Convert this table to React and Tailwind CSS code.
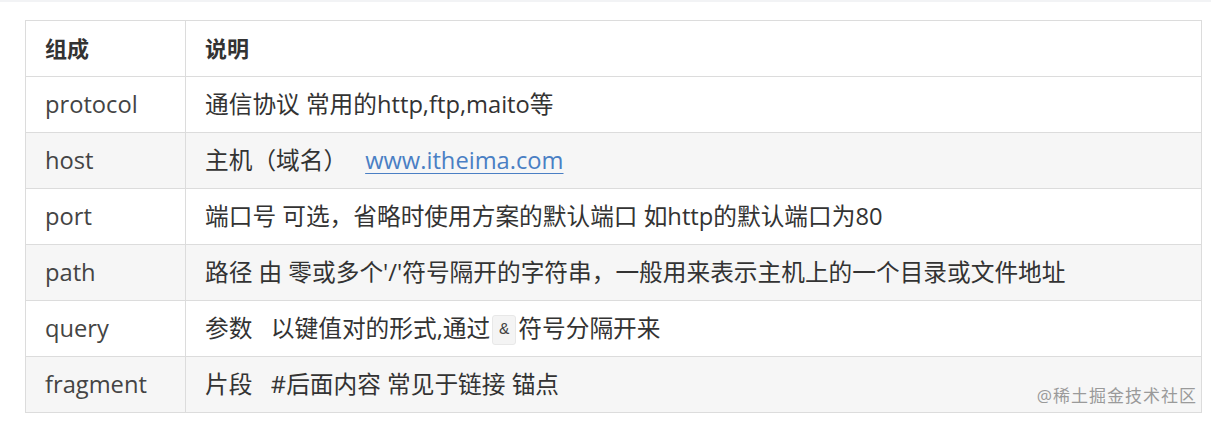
const rows = [
  { k: 'protocol', v: <>通信协议 常用的http,ftp,maito等</> },
  {
    k: 'host',
    v: (
      <>
        主机（域名）
        <a href="#" className="ml-[18px] text-[#4a7fc4] underline underline-offset-[4px] decoration-1">
          www.itheima.com
        </a>
      </>
    ),
  },
  { k: 'port', v: <>端口号 可选，省略时使用方案的默认端口 如http的默认端口为80</> },
  { k: 'path', v: <>路径 由 零或多个'/'符号隔开的字符串，一般用来表示主机上的一个目录或文件地址</> },
  {
    k: 'query',
    v: (
      <>
        参数&nbsp;&nbsp;&nbsp;以键值对的形式,通过
        <code className="mx-[2px] inline-block h-[30px] rounded-[3px] border border-[#e8e8e8] bg-[#f4f4f4] px-[6px] align-middle text-[17px] leading-[28px] text-[#444]">
          &amp;
        </code>
        符号分隔开来
      </>
    ),
  },
  { k: 'fragment', v: <>片段&nbsp;&nbsp;&nbsp;#后面内容 常见于链接 锚点</> },
];

export default function App() {
  return (
    <div
      className="relative h-[424px] w-[1211px] overflow-hidden bg-white text-[#333]"
      style={{ fontFamily: '"Open Sans", "Noto Sans CJK SC", sans-serif' }}
    >
      <div className="h-[2px] bg-[#f2f3f5]" />
      <div className="pl-[25px] pt-[18px]">
        <table className="w-[1177px] border-collapse text-[23.7px]">
          <thead>
            <tr className="h-[56px] bg-white">
              <th className="w-[160px] border border-[#dcdcdc] pl-[19px] text-left text-[22px] font-bold">组成</th>
              <th className="border border-[#dcdcdc] pl-[19px] text-left text-[22px] font-bold">说明</th>
            </tr>
          </thead>
          <tbody>
            {rows.map((r, i) => (
              <tr key={r.k} className={i % 2 ? 'h-[56px] bg-[#f6f6f6]' : 'h-[56px] bg-white'}>
                <td className="border border-[#dcdcdc] pl-[19px] text-[#444]">{r.k}</td>
                <td className="border border-[#dcdcdc] pl-[19px] text-[#333]">{r.v}</td>
              </tr>
            ))}
          </tbody>
        </table>
      </div>
      <div className="absolute bottom-[16px] right-[14px] text-[17px] tracking-[1px] text-[#9a9a9a]">
        @稀土掘金技术社区
      </div>
    </div>
  );
}
